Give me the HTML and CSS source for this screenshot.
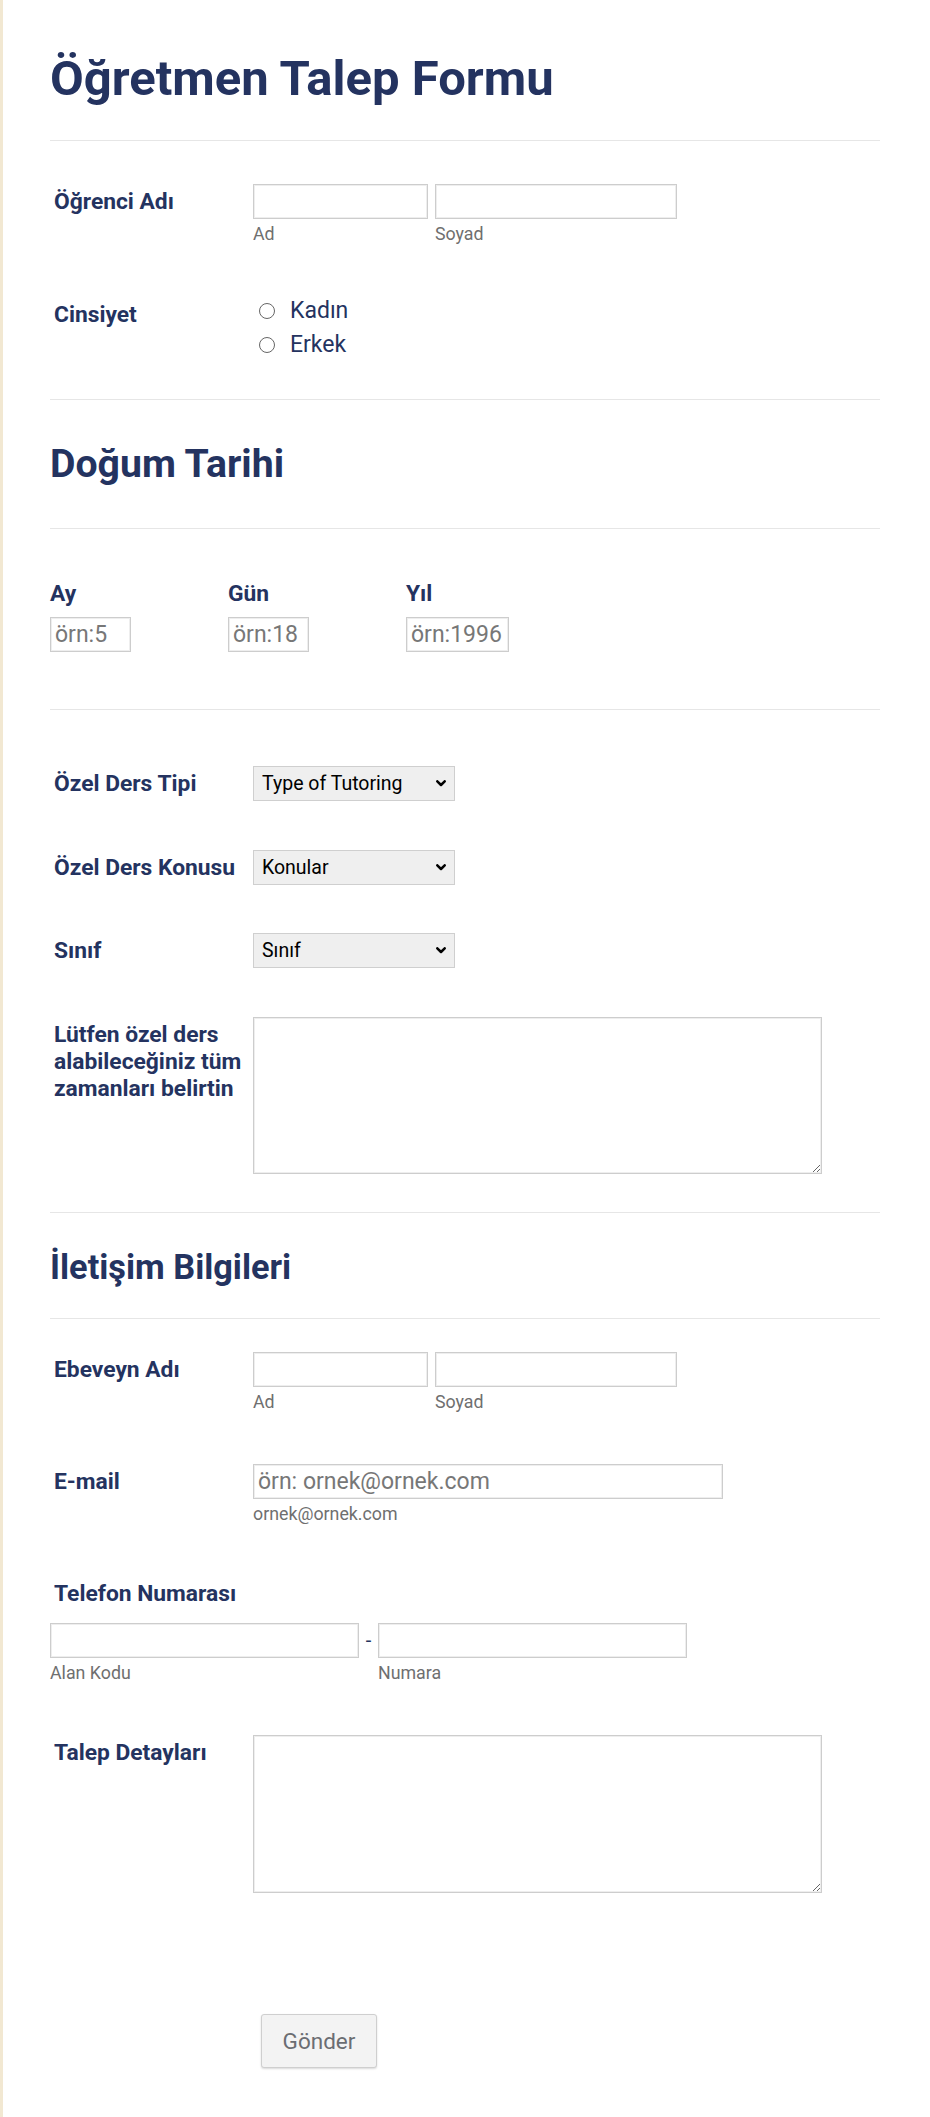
FILE: index.html
```html
<!DOCTYPE html>
<html lang="tr">
<head>
<meta charset="utf-8">
<title>Öğretmen Talep Formu</title>
<link rel="stylesheet" href="styles.css">
</head>
<body>
<div class="page">
  <header class="form-header">
    <h1 class="title">Öğretmen Talep Formu</h1>
  </header>

  <section class="section sec-student">
    <div class="row">
      <label class="lbl">Öğrenci Adı</label>
      <div class="fields">
        <div class="field">
          <input class="tb w-first" type="text">
          <span class="sub">Ad</span>
        </div>
        <div class="field">
          <input class="tb w-last" type="text">
          <span class="sub">Soyad</span>
        </div>
      </div>
    </div>
    <div class="row row-gender">
      <label class="lbl lbl-radio">Cinsiyet</label>
      <div class="radios">
        <label class="radio"><input type="radio" name="cinsiyet"><span>Kadın</span></label>
        <label class="radio"><input type="radio" name="cinsiyet"><span>Erkek</span></label>
      </div>
    </div>
  </section>

  <section class="section sec-heading sec-dob-head">
    <h2 class="heading heading-dob">Doğum Tarihi</h2>
  </section>

  <section class="section sec-date">
    <div class="date-cols">
      <div class="date-col">
        <label class="lbl-top">Ay</label>
        <input class="tb w-month" type="text" placeholder="örn:5">
      </div>
      <div class="date-col">
        <label class="lbl-top">Gün</label>
        <input class="tb w-day" type="text" placeholder="örn:18">
      </div>
      <div class="date-col">
        <label class="lbl-top">Yıl</label>
        <input class="tb w-year" type="text" placeholder="örn:1996">
      </div>
    </div>
  </section>

  <section class="section sec-tutoring">
    <div class="row">
      <label class="lbl">Özel Ders Tipi</label>
      <select class="sel"><option>Type of Tutoring</option></select>
    </div>
    <div class="row">
      <label class="lbl">Özel Ders Konusu</label>
      <select class="sel"><option>Konular</option></select>
    </div>
    <div class="row">
      <label class="lbl">Sınıf</label>
      <select class="sel"><option>Sınıf</option></select>
    </div>
    <div class="row">
      <label class="lbl">Lütfen özel ders alabileceğiniz tüm zamanları belirtin</label>
      <textarea class="ta ta-times"></textarea>
    </div>
  </section>

  <section class="section sec-heading sec-contact-head">
    <h2 class="heading heading-contact">İletişim Bilgileri</h2>
  </section>

  <section class="sec-contact">
    <div class="row">
      <label class="lbl">Ebeveyn Adı</label>
      <div class="fields">
        <div class="field">
          <input class="tb w-first" type="text">
          <span class="sub">Ad</span>
        </div>
        <div class="field">
          <input class="tb w-last" type="text">
          <span class="sub">Soyad</span>
        </div>
      </div>
    </div>
    <div class="row row-email">
      <label class="lbl">E-mail</label>
      <div class="field">
        <input class="tb w-email" type="email" placeholder="örn: ornek@ornek.com">
        <span class="sub">ornek@ornek.com</span>
      </div>
    </div>
    <div class="row-phone">
      <label class="lbl-top lbl-phone">Telefon Numarası</label>
      <div class="phone-fields">
        <div class="field">
          <input class="tb w-phone" type="tel">
          <span class="sub">Alan Kodu</span>
        </div>
        <span class="dash">-</span>
        <div class="field">
          <input class="tb w-phone" type="tel">
          <span class="sub">Numara</span>
        </div>
      </div>
    </div>
    <div class="row row-details">
      <label class="lbl">Talep Detayları</label>
      <textarea class="ta ta-details"></textarea>
    </div>
    <div class="actions">
      <button class="btn" type="submit">Gönder</button>
    </div>
  </section>
</div>
</body>
</html>
```

FILE: styles.css
```css
* {
  box-sizing: border-box;
}

html,
body {
  margin: 0;
  padding: 0;
  background: #ffffff;
}

body {
  font-family: Roboto, "Noto Sans", "Liberation Sans", sans-serif;
  color: #243360;
}

.page {
  min-height: 2117px;
  border-left: 3px solid #f2e8d2;
  padding: 0 50px 0 47px;
}

.form-header {
  padding: 50px 0 32px;
  border-bottom: 1px solid #e6e6e6;
}

.title {
  margin: 0;
  font-size: 49px;
  line-height: 58px;
  font-weight: 700;
  color: #243360;
}

.section {
  border-bottom: 1px solid #e6e6e6;
}

.row {
  display: flex;
  align-items: flex-start;
}

.lbl {
  flex: 0 0 203px;
  padding: 4px 0 0 4px;
  font-size: 22.8px;
  line-height: 27px;
  font-weight: 700;
  color: #243360;
}

.lbl-top {
  display: block;
  font-size: 22.8px;
  line-height: 27px;
  font-weight: 700;
  color: #243360;
}

/* student section */
.sec-student {
  padding: 43px 0 37px;
}

.row-gender {
  margin-top: 49px;
}

.row-gender .lbl {
  padding-top: 7px;
}

.fields {
  display: flex;
  gap: 7px;
}

.field {
  display: flex;
  flex-direction: column;
  align-items: flex-start;
}

.tb {
  display: block;
  height: 35px;
  margin: 0;
  padding: 0 4px;
  border: 1px solid #cdcdcd;
  box-shadow: inset 0 0 0 1px #eeeeee;
  background: #ffffff;
  font-family: Roboto, "Noto Sans", sans-serif;
  font-size: 23px;
  color: #333333;
  outline: none;
}

.tb::placeholder {
  color: #777777;
}

.w-first { width: 175px; }
.w-last { width: 242px; }
.w-month { width: 81px; }
.w-day { width: 81px; }
.w-year { width: 103px; }
.w-email { width: 470px; }
.w-phone { width: 309px; }

.sub {
  margin-top: 3px;
  font-size: 17.8px;
  line-height: 23px;
  color: #6f6f6f;
}

.radios {
  display: flex;
  flex-direction: column;
  padding-left: 6px;
}

.radio {
  display: flex;
  align-items: center;
  height: 34px;
  font-size: 23px;
  line-height: 34px;
  color: #243360;
}

.radio input {
  appearance: none;
  -webkit-appearance: none;
  flex: 0 0 auto;
  width: 16px;
  height: 16px;
  margin: 0 15px 0 0;
  border: 1px solid #666666;
  border-radius: 50%;
  background: #ffffff;
}

/* section headings */
.heading {
  margin: 0;
  line-height: 44px;
  font-weight: 700;
  color: #243360;
}

.heading-dob {
  font-size: 39.2px;
}

.heading-contact {
  font-size: 34.3px;
}

.sec-dob-head {
  padding: 42px 0 42px;
}

.sec-contact-head {
  padding: 31.5px 0 29.5px;
}

/* date */
.sec-date {
  padding: 51px 0 57px;
}

.date-cols {
  display: flex;
}

.date-col {
  flex: 0 0 178px;
  display: flex;
  flex-direction: column;
  align-items: flex-start;
}

.date-col .tb {
  margin-top: 10px;
}

/* tutoring */
.sec-tutoring {
  display: flex;
  flex-direction: column;
  gap: 48.5px;
  padding: 56px 0 38.5px;
}

.sel {
  appearance: none;
  -webkit-appearance: none;
  width: 202px;
  height: 35px;
  margin: 0;
  padding: 0 30px 0 8px;
  border: 1px solid #cfcfcf;
  border-radius: 0;
  background-color: #efefef;
  background-image: url("data:image/svg+xml,%3Csvg xmlns='http://www.w3.org/2000/svg' width='10' height='7' viewBox='0 0 10 7'%3E%3Cpath d='M1.3 1.3 L5 5 L8.7 1.3' fill='none' stroke='%23000' stroke-width='2.5' stroke-linecap='round' stroke-linejoin='round'/%3E%3C/svg%3E");
  background-repeat: no-repeat;
  background-position: right 8px center;
  background-size: 10px 7px;
  font-family: Roboto, "Noto Sans", sans-serif;
  font-size: 19.5px;
  color: #000000;
}

.ta {
  display: block;
  width: 569px;
  margin: 0;
  border: 1px solid #cdcdcd;
  box-shadow: inset 0 0 0 1px #eeeeee;
  background: #ffffff;
  font-family: Roboto, "Noto Sans", sans-serif;
  font-size: 18px;
}

.ta-times { height: 157px; }
.ta-details { height: 158px; }

/* contact */
.sec-contact {
  padding-top: 33px;
}

.row-email {
  margin-top: 51px;
}

.row-phone {
  margin-top: 55px;
}

.lbl-phone {
  padding-left: 4px;
}

.phone-fields {
  display: flex;
  align-items: flex-start;
  margin-top: 16px;
}

.dash {
  width: 19px;
  height: 35px;
  line-height: 35px;
  text-align: center;
  font-size: 20px;
  color: #243360;
}

.row-details {
  margin-top: 51px;
}

.actions {
  margin-top: 121px;
  padding-left: 211px;
}

.btn {
  width: 116px;
  height: 54px;
  margin: 0;
  padding: 0;
  border: 1px solid #cfcfcf;
  border-radius: 3px;
  background: #f3f3f3;
  box-shadow: 0 1px 2px rgba(0, 0, 0, 0.15);
  font-family: Roboto, "Noto Sans", sans-serif;
  font-size: 22.5px;
  color: #6b6d72;
  cursor: pointer;
}
```
